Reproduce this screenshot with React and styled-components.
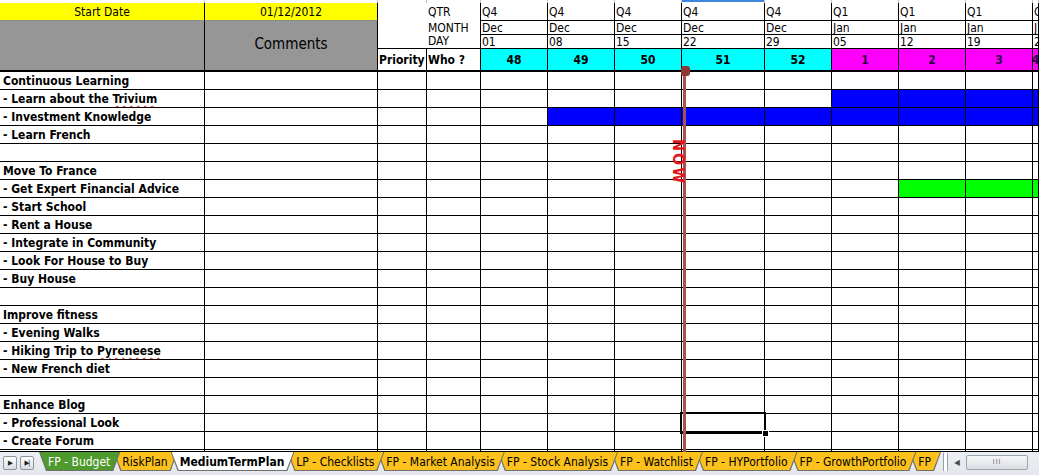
import React from 'react';
import styled, { createGlobalStyle } from 'styled-components';


// DATA


const COLS = [205, 173, 49, 54, 67, 67, 67, 83, 67, 67, 67, 67];

const WEEKS = [
    { q: 'Q4', m: 'Dec', d: '01', n: 48, bg: '#00ffff' },
    { q: 'Q4', m: 'Dec', d: '08', n: 49, bg: '#00ffff' },
    { q: 'Q4', m: 'Dec', d: '15', n: 50, bg: '#00ffff' },
    { q: 'Q4', m: 'Dec', d: '22', n: 51, bg: '#00ffff' },
    { q: 'Q4', m: 'Dec', d: '29', n: 52, bg: '#00ffff' },
    { q: 'Q1', m: 'Jan', d: '05', n: 1, bg: '#ff00ff' },
    { q: 'Q1', m: 'Jan', d: '12', n: 2, bg: '#ff00ff' },
    { q: 'Q1', m: 'Jan', d: '19', n: 3, bg: '#ff00ff' },
    { q: 'Q1', m: 'Jan', d: '26', n: 4, bg: '#ff00ff' },
];

const BLUE = '#0000ff';
const GREEN = '#00ff00';

const TASKS = [
    { t: 'Continuous Learning' },
    { t: '- Learn about the ', miss: 'Trivium', fill: [5, 8, BLUE] },
    { t: '- Investment Knowledge', fill: [1, 8, BLUE] },
    { t: '- Learn French' },
    { t: '' },
    { t: 'Move To France' },
    { t: '- Get Expert Financial Advice', fill: [6, 8, GREEN] },
    { t: '- Start School' },
    { t: '- Rent a House' },
    { t: '- Integrate in Community' },
    { t: '- Look For House to Buy' },
    { t: '- Buy House' },
    { t: '' },
    { t: 'Improve fitness' },
    { t: '- Evening Walks' },
    { t: '- Hiking Trip to ', miss: 'Pyreneese' },
    { t: '- New French diet' },
    { t: '' },
    { t: 'Enhance Blog' },
    { t: '- Professional Look' },
    { t: '- Create Forum' },
];

const TABS = [
    { name: 'FP - Budget', bg: '#4e9a2c', color: '#fff' },
    { name: 'RiskPlan', bg: '#fcc21b', color: '#000' },
    { name: 'MediumTermPlan', bg: '#fff', color: '#000', active: true },
    { name: 'LP - Checklists', bg: '#fcc21b', color: '#000' },
    { name: 'FP - Market Analysis', bg: '#fcc21b', color: '#000' },
    { name: 'FP - Stock Analysis', bg: '#fcc21b', color: '#000' },
    { name: 'FP - Watchlist', bg: '#fcc21b', color: '#000' },
    { name: 'FP - HYPortfolio', bg: '#fcc21b', color: '#000' },
    { name: 'FP - GrowthPortfolio', bg: '#fcc21b', color: '#000' },
    { name: 'FP', bg: '#fcc21b', color: '#000' },
];


// STYLES


const GlobalStyle = createGlobalStyle`
    html, body {
        margin: 0;
        padding: 0;
        background: #fff;
        overflow: hidden;
    }
    body {
        font-family: "DejaVu Sans Condensed", "Liberation Sans", sans-serif;
    }
`;

const Window = styled.div`
    width: 1039px;
    height: 475px;
    display: flex;
    flex-direction: column;
    position: relative;
    overflow: hidden;
`;

const Sheet = styled.div`
    display: grid;
    grid-template-columns: ${COLS.map(w => w + 'px').join(' ')} 1fr;
    grid-template-rows: 3px 18px 14px 14px 23px repeat(21, 18px) 2px;
    font-size: 12px;
    color: #000;
`;

const Cell = styled.div`
    grid-column: ${p => p.$col} / span ${p => p.$cs || 1};
    grid-row: ${p => p.$row} / span ${p => p.$rs || 1};
    box-sizing: border-box;
    border-right: 1px solid #000;
    border-bottom: 1px solid #000;
    background: ${p => p.$bg || '#fff'};
    display: flex;
    align-items: center;
    overflow: hidden;
    white-space: nowrap;
    min-width: 0;
`;

const StripCell = styled(Cell)`
    border-right-color: #c4c4c4;
    border-bottom: none;
    background: ${p => p.$hl ? 'linear-gradient(#3d88dc 0 2px, #fff 2px)' : '#fff'};
`;

const DateCell = styled(Cell)`
    background: #ffff00;
    justify-content: center;
    border-bottom-color: #8a8a8a;
`;

const GreyBlock = styled(Cell)`
    background: #969696;
    justify-content: center;
    border-bottom-width: 2px;
    font-size: 15px;
    padding-bottom: 3px;
`;

const AxisBlock = styled(Cell)`
    flex-direction: column;
    align-items: stretch;
    padding-left: 50px;
`;

const AxisLabel = styled.div`
    height: ${p => p.$h}px;
    line-height: ${p => p.$h}px;
`;

const WeekHead = styled(Cell)`
    padding-left: 1px;
    line-height: 14px;
`;

const WeekNum = styled(Cell)`
    justify-content: center;
    font-weight: 700;
    border-bottom-width: 2px;
    color: ${p => p.$dark || '#000'};
`;

const HeadLabel = styled(Cell)`
    font-weight: 700;
    padding-left: 1px;
    border-bottom-width: 2px;
`;

const TaskLabel = styled(Cell)`
    font-weight: 700;
    padding-left: 3px;
    padding-top: 1px;
`;

const Misspelt = styled.span`
    text-decoration: underline wavy #e02020;
    text-decoration-thickness: 1px;
    text-underline-offset: 2px;
`;

const NowLine = styled.div`
    position: absolute;
    left: 683px;
    top: 70px;
    width: 3px;
    height: 392px;
    background: #a9534f;
    z-index: 5;
`;

const NowPin = styled.div`
    position: absolute;
    left: 681px;
    top: 66px;
    width: 9px;
    height: 10px;
    border-radius: 3px;
    background: #8d3a36;
    z-index: 6;
`;

const NowText = styled.div`
    position: absolute;
    left: 671px;
    top: 139px;
    writing-mode: vertical-rl;
    font-family: "DejaVu Sans Condensed", "Liberation Sans", sans-serif;
    font-size: 16px;
    font-weight: 700;
    line-height: 14px;
    letter-spacing: 2px;
    color: #e3161d;
    z-index: 6;
`;

const Selection = styled.div`
    position: absolute;
    left: 680px;
    top: 412px;
    width: 86px;
    height: 22px;
    box-sizing: border-box;
    border: 2px solid #000;
    z-index: 4;

    &::after {
        content: '';
        position: absolute;
        right: -5px;
        bottom: -5px;
        width: 5px;
        height: 5px;
        background: #000;
        border: 1px solid #fff;
    }
`;

const TabBar = styled.div`
    flex: 1;
    display: flex;
    align-items: flex-start;
    background: linear-gradient(#eceff3, #e3e7ec);
    font-size: 12px;
    white-space: nowrap;
`;

const NavButtons = styled.div`
    display: flex;
    gap: 3px;
    padding: 4px 0 0 3px;
    width: 33px;
    flex-shrink: 0;
`;

const NavButton = styled.div`
    width: 14px;
    height: 14px;
    box-sizing: border-box;
    border: 1px solid #8e949c;
    border-radius: 2px;
    background: linear-gradient(#ffffff, #d9dde2);
    display: flex;
    align-items: center;
    justify-content: center;
    font-size: 7px;
    color: #1a1a1a;
    letter-spacing: -1px;
`;

const Tabs = styled.div`
    display: flex;
    padding-left: 3px;
    flex-shrink: 0;
`;

const Tab = styled.div`
    position: relative;
    flex-shrink: 0;
    height: 19px;
    margin-left: -7px;
    padding: 0 10px 0 9px;
    display: flex;
    align-items: center;
    font-size: 12px;
    z-index: ${p => p.$z};
    color: ${p => p.$color};
    font-weight: ${p => p.$active ? 700 : 400};

    &:first-child {
        margin-left: 0;
    }

    &::before,
    &::after {
        content: '';
        position: absolute;
        clip-path: polygon(0 0, 100% 0, calc(100% - 7px) 100%, 7px 100%);
    }

    &::before {
        inset: 0;
        background: #6f6f6f;
    }

    &::after {
        inset: 0 1px 1px 1px;
        background: ${p => p.$bg};
    }
`;

const TabText = styled.span`
    position: relative;
    z-index: 1;
`;

const Splitter = styled.div`
    width: 3px;
    height: 18px;
    flex-shrink: 0;
    margin: 1px 4px 0 2px;
    border-left: 1px solid #9aa0a8;
    border-right: 1px solid #9aa0a8;
    background: #fff;
`;

const ScrollArea = styled.div`
    flex: 1;
    display: flex;
    align-items: center;
    height: 20px;
    gap: 4px;
`;

const ScrollArrow = styled.div`
    font-size: 8px;
    color: #4a4a4a;
    width: 10px;
    text-align: center;
`;

const ScrollThumb = styled.div`
    width: 62px;
    height: 15px;
    box-sizing: border-box;
    border: 1px solid #9ea4ab;
    border-radius: 2px;
    background: linear-gradient(#f6f7f8, #dadde1);
    display: flex;
    align-items: center;
    justify-content: center;
    font-size: 7px;
    color: #6a6a6a;
    letter-spacing: 1px;
`;


// COMPONENT


const fillFor = (task, i) => {
    if (!task.fill) return undefined;
    const [from, to, color] = task.fill;
    return i >= from && i <= to ? color : undefined;
};

export default function App() {
    return (
        <Window>
            <GlobalStyle />
            <Sheet>
                {[...COLS, 0].map((_, i) => (
                    <StripCell key={'s' + i} $col={i + 1} $row={1} $hl={i === 7} />
                ))}

                <DateCell $col={1} $row={2}>Start Date</DateCell>
                <DateCell $col={2} $row={2}>01/12/2012</DateCell>
                <GreyBlock $col={1} $row={3} $rs={3} />
                <GreyBlock $col={2} $row={3} $rs={3}>Comments</GreyBlock>

                <AxisBlock $col={3} $cs={2} $row={2} $rs={3}>
                    <AxisLabel $h={18}>QTR</AxisLabel>
                    <AxisLabel $h={14}>MONTH</AxisLabel>
                    <AxisLabel $h={13}>DAY</AxisLabel>
                </AxisBlock>
                <HeadLabel $col={3} $row={5}>Priority</HeadLabel>
                <HeadLabel $col={4} $row={5}>Who ?</HeadLabel>

                {WEEKS.map((w, i) => (
                    <React.Fragment key={'w' + i}>
                        <WeekHead $col={i + 5} $row={2}>{w.q}</WeekHead>
                        <WeekHead $col={i + 5} $row={3}>{w.m}</WeekHead>
                        <WeekHead $col={i + 5} $row={4}>{w.d}</WeekHead>
                        <WeekNum $col={i + 5} $row={5} $bg={w.bg} $dark={w.n < 10 ? '#2a0048' : '#000'}>
                            {w.n}
                        </WeekNum>
                    </React.Fragment>
                ))}

                {TASKS.map((task, r) => (
                    <React.Fragment key={'t' + r}>
                        <TaskLabel $col={1} $row={r + 6}>
                            <span>
                                {task.t}
                                {task.miss && <Misspelt>{task.miss}</Misspelt>}
                            </span>
                        </TaskLabel>
                        <Cell $col={2} $row={r + 6} />
                        <Cell $col={3} $row={r + 6} />
                        <Cell $col={4} $row={r + 6} />
                        {WEEKS.map((_, i) => (
                            <Cell key={i} $col={i + 5} $row={r + 6} $bg={fillFor(task, i)} />
                        ))}
                    </React.Fragment>
                ))}

                {[...COLS, 0].map((_, i) => (
                    <Cell key={'e' + i} $col={i + 1} $row={27} />
                ))}
            </Sheet>

            <Selection />
            <NowLine />
            <NowPin />
            <NowText>NOW</NowText>

            <TabBar>
                <NavButtons>
                    <NavButton>▶</NavButton>
                    <NavButton>▶|</NavButton>
                </NavButtons>
                <Tabs>
                    {TABS.map((tab, i) => (
                        <Tab
                            key={tab.name}
                            $bg={tab.bg}
                            $color={tab.color}
                            $active={tab.active}
                            $z={tab.active ? 50 : 30 - i}
                        >
                            <TabText>{tab.name}</TabText>
                        </Tab>
                    ))}
                </Tabs>
                <Splitter />
                <ScrollArea>
                    <ScrollArrow>◀</ScrollArrow>
                    <ScrollThumb>III</ScrollThumb>
                </ScrollArea>
            </TabBar>
        </Window>
    );
}
